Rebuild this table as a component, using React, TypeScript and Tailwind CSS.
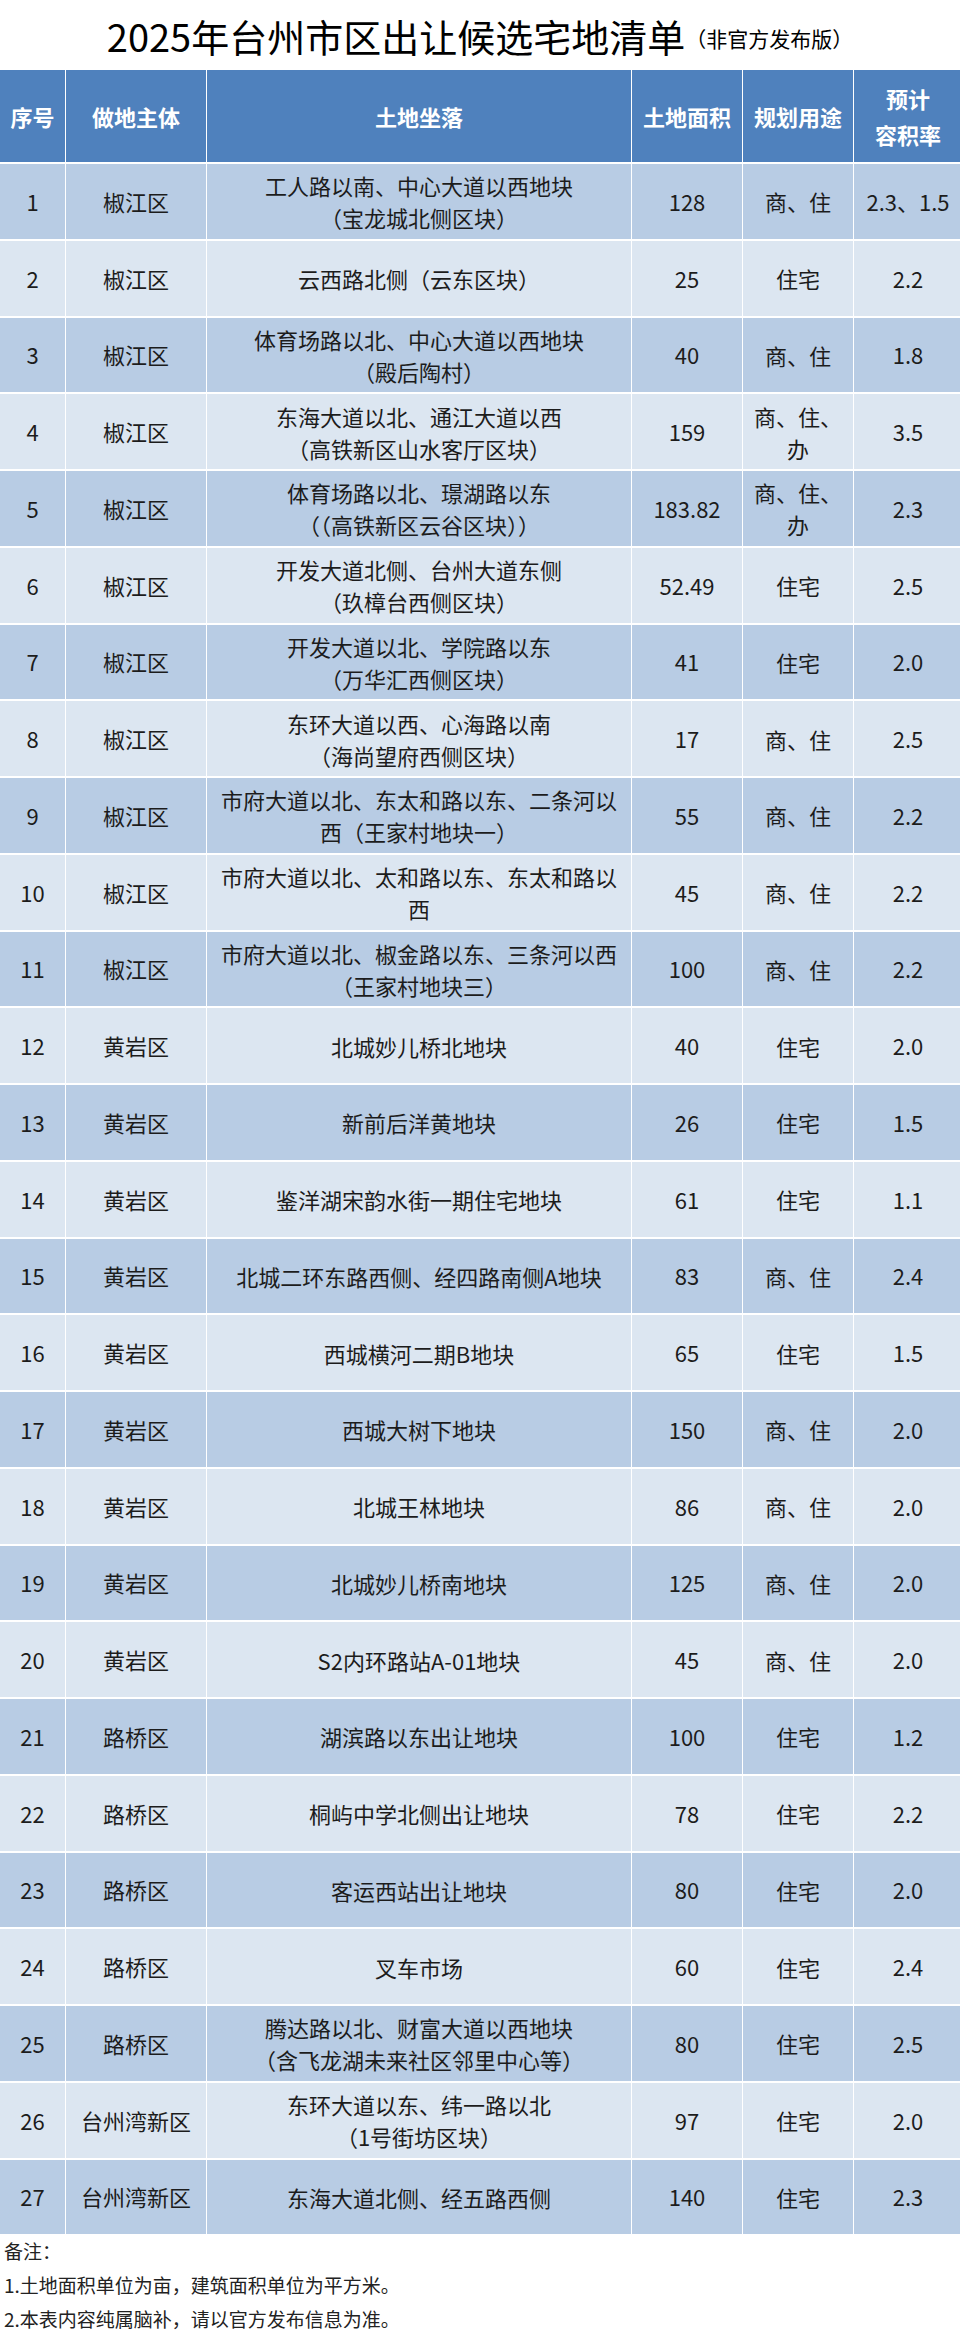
import React from "react";

type Row = {
  no: number;
  owner: string;
  loc: string[];
  area: string;
  use: string[];
  far: string;
};

const rows: Row[] = [
  { no: 1, owner: "椒江区", loc: ["工人路以南、中心大道以西地块", "（宝龙城北侧区块）"], area: "128", use: ["商、住"], far: "2.3、1.5" },
  { no: 2, owner: "椒江区", loc: ["云西路北侧（云东区块）"], area: "25", use: ["住宅"], far: "2.2" },
  { no: 3, owner: "椒江区", loc: ["体育场路以北、中心大道以西地块", "（殿后陶村）"], area: "40", use: ["商、住"], far: "1.8" },
  { no: 4, owner: "椒江区", loc: ["东海大道以北、通江大道以西", "（高铁新区山水客厅区块）"], area: "159", use: ["商、住、", "办"], far: "3.5" },
  { no: 5, owner: "椒江区", loc: ["体育场路以北、璟湖路以东", "（（高铁新区云谷区块））"], area: "183.82", use: ["商、住、", "办"], far: "2.3" },
  { no: 6, owner: "椒江区", loc: ["开发大道北侧、台州大道东侧", "（玖樟台西侧区块）"], area: "52.49", use: ["住宅"], far: "2.5" },
  { no: 7, owner: "椒江区", loc: ["开发大道以北、学院路以东", "（万华汇西侧区块）"], area: "41", use: ["住宅"], far: "2.0" },
  { no: 8, owner: "椒江区", loc: ["东环大道以西、心海路以南", "（海尚望府西侧区块）"], area: "17", use: ["商、住"], far: "2.5" },
  { no: 9, owner: "椒江区", loc: ["市府大道以北、东太和路以东、二条河以", "西（王家村地块一）"], area: "55", use: ["商、住"], far: "2.2" },
  { no: 10, owner: "椒江区", loc: ["市府大道以北、太和路以东、东太和路以", "西"], area: "45", use: ["商、住"], far: "2.2" },
  { no: 11, owner: "椒江区", loc: ["市府大道以北、椒金路以东、三条河以西", "（王家村地块三）"], area: "100", use: ["商、住"], far: "2.2" },
  { no: 12, owner: "黄岩区", loc: ["北城妙儿桥北地块"], area: "40", use: ["住宅"], far: "2.0" },
  { no: 13, owner: "黄岩区", loc: ["新前后洋黄地块"], area: "26", use: ["住宅"], far: "1.5" },
  { no: 14, owner: "黄岩区", loc: ["鉴洋湖宋韵水街一期住宅地块"], area: "61", use: ["住宅"], far: "1.1" },
  { no: 15, owner: "黄岩区", loc: ["北城二环东路西侧、经四路南侧A地块"], area: "83", use: ["商、住"], far: "2.4" },
  { no: 16, owner: "黄岩区", loc: ["西城横河二期B地块"], area: "65", use: ["住宅"], far: "1.5" },
  { no: 17, owner: "黄岩区", loc: ["西城大树下地块"], area: "150", use: ["商、住"], far: "2.0" },
  { no: 18, owner: "黄岩区", loc: ["北城王林地块"], area: "86", use: ["商、住"], far: "2.0" },
  { no: 19, owner: "黄岩区", loc: ["北城妙儿桥南地块"], area: "125", use: ["商、住"], far: "2.0" },
  { no: 20, owner: "黄岩区", loc: ["S2内环路站A-01地块"], area: "45", use: ["商、住"], far: "2.0" },
  { no: 21, owner: "路桥区", loc: ["湖滨路以东出让地块"], area: "100", use: ["住宅"], far: "1.2" },
  { no: 22, owner: "路桥区", loc: ["桐屿中学北侧出让地块"], area: "78", use: ["住宅"], far: "2.2" },
  { no: 23, owner: "路桥区", loc: ["客运西站出让地块"], area: "80", use: ["住宅"], far: "2.0" },
  { no: 24, owner: "路桥区", loc: ["叉车市场"], area: "60", use: ["住宅"], far: "2.4" },
  { no: 25, owner: "路桥区", loc: ["腾达路以北、财富大道以西地块", "（含飞龙湖未来社区邻里中心等）"], area: "80", use: ["住宅"], far: "2.5" },
  { no: 26, owner: "台州湾新区", loc: ["东环大道以东、纬一路以北", "（1号街坊区块）"], area: "97", use: ["住宅"], far: "2.0" },
  { no: 27, owner: "台州湾新区", loc: ["东海大道北侧、经五路西侧"], area: "140", use: ["住宅"], far: "2.3" },
];

const cols = "grid grid-cols-[65px_140px_424px_110px_110px_108px] gap-x-px";

const Lines = ({ lines }: { lines: string[] }) => (
  <div className="leading-[32px] whitespace-nowrap">
    {lines.map((l, i) => (
      <div key={i}>{l}</div>
    ))}
  </div>
);

export default function App() {
  return (
    <div
      className="w-[960px] bg-white text-[#1c1c1c]"
      style={{ fontFamily: '"Noto Sans CJK SC", "Noto Sans", sans-serif' }}
    >
      {/* title */}
      <div className="h-[70px] flex items-center justify-center">
        <span className="text-[38px] font-normal text-black">
          2025年台州市区出让候选宅地清单
        </span>
        <span className="text-[21px] mt-2 text-black">（非官方发布版）</span>
      </div>

      <div className="flex flex-col gap-y-[2px] bg-white">
        <div className={`${cols} h-[92px] text-white font-bold text-[22px] text-center`}>
          <div className="bg-[#4f81bd] flex items-center justify-center">序号</div>
          <div className="bg-[#4f81bd] flex items-center justify-center">做地主体</div>
          <div className="bg-[#4f81bd] flex items-center justify-center">土地坐落</div>
          <div className="bg-[#4f81bd] flex items-center justify-center">土地面积</div>
          <div className="bg-[#4f81bd] flex items-center justify-center">规划用途</div>
          <div className="bg-[#4f81bd] flex items-center justify-center leading-[36px]">
            预计
            <br />
            容积率
          </div>
        </div>

        {rows.map((r) => {
          const bg = r.no % 2 === 1 ? "bg-[#b8cce4]" : "bg-[#dce6f1]";
          const cell = `${bg} flex items-center justify-center text-center`;
          return (
            <div key={r.no} className={`${cols} h-[74.75px] text-[22px]`}>
              <div className={cell}>{r.no}</div>
              <div className={cell}>{r.owner}</div>
              <div className={cell}>
                <Lines lines={r.loc} />
              </div>
              <div className={cell}>{r.area}</div>
              <div className={cell}>
                <Lines lines={r.use} />
              </div>
              <div className={cell}>{r.far}</div>
            </div>
          );
        })}
      </div>

      <div className="px-1 text-[19px] leading-[34px] text-[#222]">
        <div>备注：</div>
        <div>1.土地面积单位为亩，建筑面积单位为平方米。</div>
        <div>2.本表内容纯属脑补，请以官方发布信息为准。</div>
      </div>
    </div>
  );
}
